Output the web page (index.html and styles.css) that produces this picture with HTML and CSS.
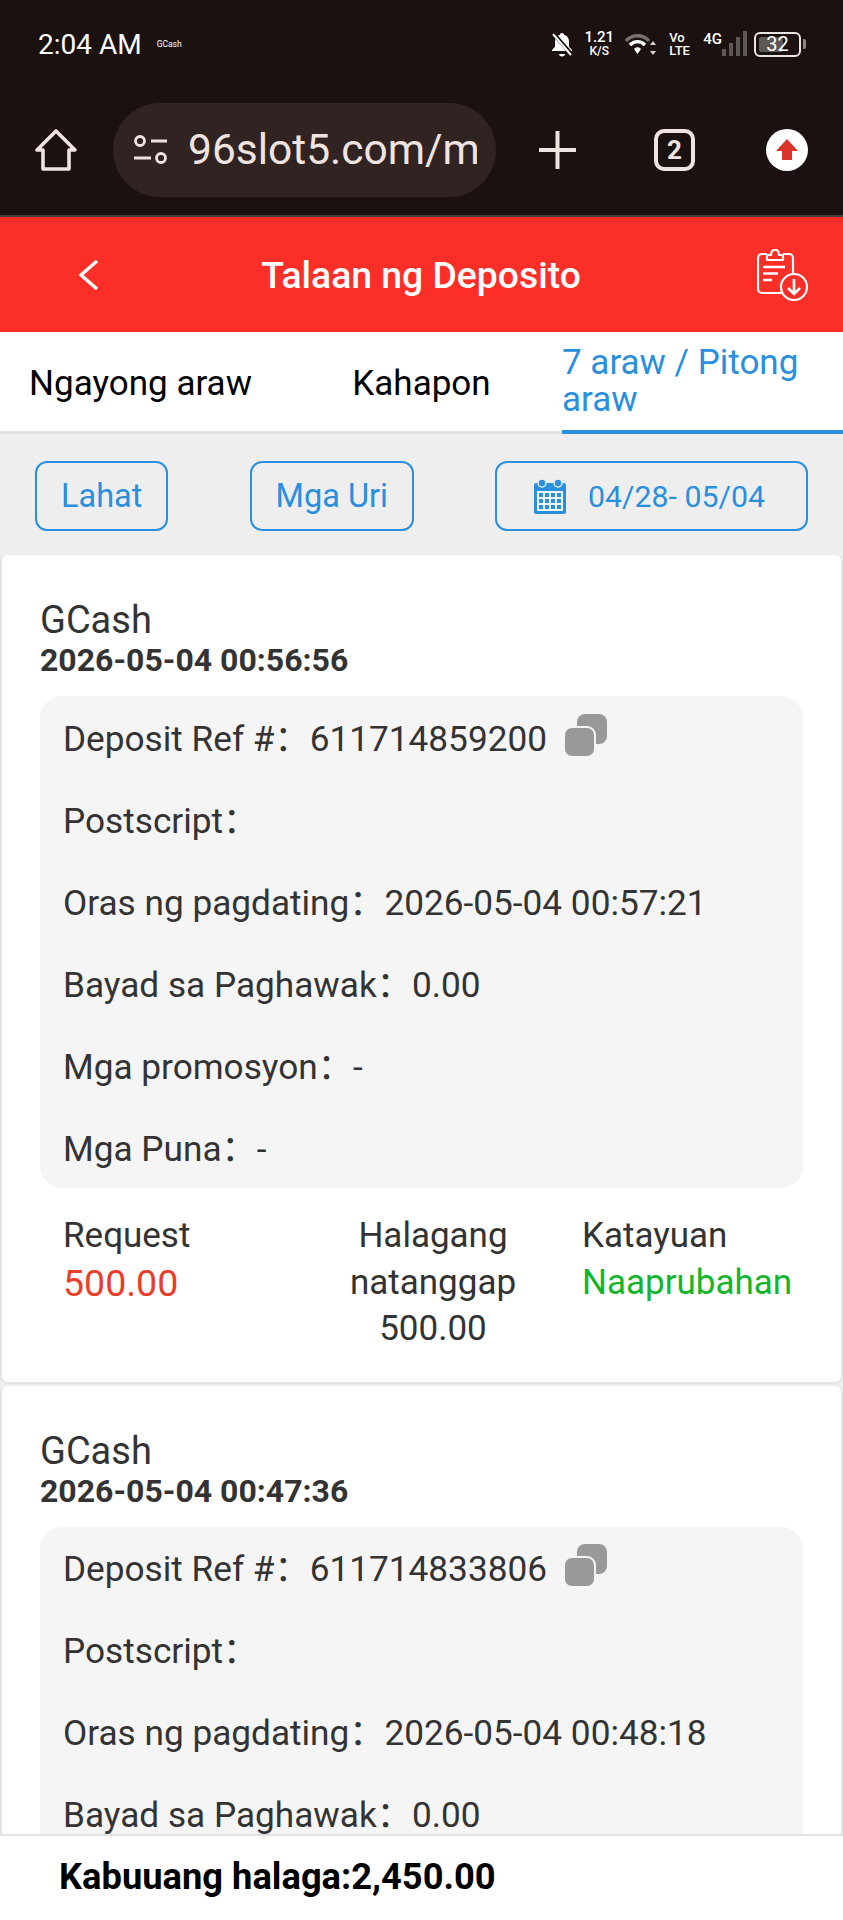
FILE: index.html
```html
<!DOCTYPE html>
<html lang="tl">
<head>
<meta charset="utf-8">
<title>Talaan ng Deposito</title>
<link rel="stylesheet" href="styles.css">
</head>
<body>
<div class="phone">
	<div class="status">
		<span class="time">2:04 AM</span>
		<span class="notice">GCash</span>
		<div class="status-right">
			<svg class="i-bell" viewBox="0 0 22 25"><path d="M11 1c1.200 0 2 .8 2 1.800 3.400.8 5 3.400 5 7v5l3 3.200v1H1v-1l3-3.200v-5c0-3.600 1.600-6.200 5-7C9 1.800 9.800 1 11 1zM8 22h6c0 1.300-1.300 2.500-3 2.500S8 23.300 8 22z" fill="#fff"/><path d="M2 1l19 22" stroke="#1a1110" stroke-width="4"/><path d="M2 2l18 21" stroke="#fff" stroke-width="2"/></svg>
			<div class="speed"><b>1.21</b><b>K/S</b></div>
			<svg class="i-wifi" viewBox="0 0 31 24"><path d="M1 9c6-7 17-7 23 0" fill="none" stroke="#77716f" stroke-width="3.400"/><path d="M5 13c4-4.500 11-4.500 15 0" fill="none" stroke="#fff" stroke-width="3.400"/><path d="M9 17c2-2.200 5-2.200 7 0l-3.500 5z" fill="#fff"/><path d="M28 9l3 4h-6zM28 23l3-4h-6z" fill="#d8d4d2"/></svg>
			<div class="volte"><b>Vo</b><b>LTE</b></div>
			<b class="net">4G</b>
			<svg class="i-signal" viewBox="0 0 26 26"><rect x="1" y="18" width="4" height="7" fill="#5d5755"/><rect x="8" y="12" width="4" height="13" fill="#5d5755"/><rect x="15" y="6" width="4" height="19" fill="#5d5755"/><rect x="22" y="0" width="4" height="25" fill="#5d5755"/></svg>
			<div class="battery"><span class="battery-fill"></span><span class="battery-num">32</span></div>
			<span class="battery-nub"></span>
		</div>
	</div>

	<div class="toolbar">
		<svg class="i-home" viewBox="0 0 42 42"><path d="M21 2L2 21h6v19h26V21h6z" fill="none" stroke="#f0e4e0" stroke-width="3.600" stroke-linejoin="round"/></svg>
		<div class="url">
			<svg class="i-tune" viewBox="0 0 35 29"><circle cx="7" cy="6" r="4.500" fill="none" stroke="#f0e4e0" stroke-width="2.800"/><path d="M18 6h16M1 23h17" stroke="#f0e4e0" stroke-width="3"/><circle cx="28" cy="23" r="4.500" fill="none" stroke="#f0e4e0" stroke-width="2.800"/></svg>
			<span class="url-text">96slot5.com/ma</span>
		</div>
		<svg class="i-plus" viewBox="0 0 37 38"><path d="M18.500 1v36M1 19h35" stroke="#f0e4e0" stroke-width="4" stroke-linecap="round"/></svg>
		<div class="tabcount">2</div>
		<svg class="i-update" viewBox="0 0 42 42"><circle cx="21" cy="21" r="21" fill="#fff"/><path d="M21 10l11 12h-6v9H16v-9h-6z" fill="#d9352b"/></svg>
	</div>

	<div class="head">
		<svg class="i-back" viewBox="0 0 20 30"><path d="M18 1L2 15l16 14" fill="none" stroke="#fff" stroke-width="3.400"/></svg>
		<h1 class="title">Talaan ng Deposito</h1>
		<svg class="i-record" viewBox="0 0 51 52"><path d="M10 5H5a4 4 0 0 0-4 4v31a4 4 0 0 0 4 4h20M26 5h6a4 4 0 0 1 4 4v15" fill="none" stroke="#fff" stroke-width="2.200"/><path d="M10 11V6h4c0-7 8-7 8 0h4v5z" fill="none" stroke="#fff" stroke-width="2.200" stroke-linejoin="round"/><path d="M6 18h22M6 24.500h15M6 31h9" stroke="#fff" stroke-width="2.600"/><circle cx="37" cy="38" r="13" fill="none" stroke="#fff" stroke-width="2.200"/><path d="M37 30v15M31 39l6 6 6-6" fill="none" stroke="#fff" stroke-width="2.600"/></svg>
	</div>

	<div class="tabs">
		<div class="tab">Ngayong araw</div>
		<div class="tab">Kahapon</div>
		<div class="tab active">7 araw / Pitong araw</div>
	</div>

	<div class="filter">
		<div class="btn">Lahat</div>
		<div class="btn">Mga Uri</div>
		<div class="btn date">
			<svg class="i-cal" viewBox="0 0 32 36"><path d="M2 5h28a2 2 0 0 1 2 2v27a2 2 0 0 1-2 2H2a2 2 0 0 1-2-2V7a2 2 0 0 1 2-2z" fill="#2a8fdc"/><rect x="3" y="13" width="26" height="20" fill="#eef5fb"/><circle cx="8" cy="5" r="4" fill="#2a8fdc" stroke="#eeeeef" stroke-width="1.500"/><circle cx="24" cy="5" r="4" fill="#2a8fdc" stroke="#eeeeef" stroke-width="1.500"/><path d="M5 15h4v4H5zM11 15h4v4h-4zM17 15h4v4h-4zM23 15h4v4h-4zM5 21h4v4H5zM11 21h4v4h-4zM17 21h4v4h-4zM23 21h4v4h-4zM5 27h4v4H5zM11 27h4v4h-4zM17 27h4v4h-4zM23 27h4v4h-4z" fill="#2a8fdc"/></svg>
			<span>04/28- 05/04</span>
		</div>
	</div>

	<div class="card">
		<div class="name">GCash</div>
		<div class="when">2026-05-04 00:56:56</div>
		<div class="panel">
			<div class="row"><span>Deposit Ref #：611714859200</span>
				<svg class="i-copy" viewBox="0 0 43 43"><rect x="13" y="0" width="30" height="30" rx="8" fill="#999"/><rect x="0" y="13" width="31" height="30" rx="8" fill="#999" stroke="#f5f5f5" stroke-width="2"/></svg>
			</div>
			<div class="row">Postscript：</div>
			<div class="row">Oras ng pagdating：2026-05-04 00:57:21</div>
			<div class="row">Bayad sa Paghawak：0.00</div>
			<div class="row">Mga promosyon：-</div>
			<div class="row">Mga Puna：-</div>
		</div>
		<div class="sums">
			<div class="sum">Request<div class="red">500.00</div></div>
			<div class="sum mid">Halagang natanggap<div>500.00</div></div>
			<div class="sum last">Katayuan<div class="green">Naaprubahan</div></div>
		</div>
	</div>

	<div class="card">
		<div class="name">GCash</div>
		<div class="when">2026-05-04 00:47:36</div>
		<div class="panel">
			<div class="row"><span>Deposit Ref #：611714833806</span>
				<svg class="i-copy" viewBox="0 0 43 43"><rect x="13" y="0" width="30" height="30" rx="8" fill="#999"/><rect x="0" y="13" width="31" height="30" rx="8" fill="#999" stroke="#f5f5f5" stroke-width="2"/></svg>
			</div>
			<div class="row">Postscript：</div>
			<div class="row">Oras ng pagdating：2026-05-04 00:48:18</div>
			<div class="row">Bayad sa Paghawak：0.00</div>
		</div>
	</div>

	<div class="total">Kabuuang halaga:2,450.00</div>
</div>
</body>
</html>
```

FILE: styles.css
```css
* { margin: 0; padding: 0; box-sizing: border-box; }
body { background: #fff; font-family: Roboto, "Noto Sans CJK SC", sans-serif; color: #333; }
svg { display: block; flex: none; }

.phone { width: 843px; height: 1920px; overflow: hidden; position: relative; background: #eeeeef; }

/* status bar */
.status { height: 84px; padding: 4px 37px 0 38px; background: #1a1110; color: #fff; display: flex; align-items: center; }
.time { font-size: 28px; }
.notice { font-size: 8.500px; margin-left: 15px; }
.status-right { margin-left: auto; display: flex; align-items: center; }
.status-right b { display: block; font-weight: 500; }
.i-bell { width: 22px; height: 25px; }
.speed { margin-left: 11px; width: 30px; text-align: center; font-size: 13px; line-height: 14px; }
.speed b:first-child { font-size: 15px; }
.speed b:last-child { font-size: 12px; }
.i-wifi { width: 31px; height: 24px; margin-left: 11px; }
.volte { margin-left: 13px; font-size: 13px; line-height: 13px; width: 24px; }
.net { font-size: 15px; margin: -10px 0 0 10px; }
.i-signal { width: 26px; height: 26px; margin-left: -1px; }
.battery { width: 47px; height: 25px; margin-left: 7px; border: 2px solid #e8e4e2; border-radius: 6px; position: relative; text-align: center; font-size: 20px; line-height: 21px; }
.battery-fill { position: absolute; left: 3px; top: 3px; bottom: 3px; width: 24px; background: #5d5755; border-radius: 2px; }
.battery-num { position: relative; }
.battery-nub { width: 3px; height: 10px; margin-left: 2px; background: #8c8684; border-radius: 0 2px 2px 0; }

/* browser bar */
.toolbar { height: 133px; background: #1a1110; border-bottom: 2px solid #4a3a38; display: flex; align-items: center; padding-left: 35px; }
.i-home { width: 42px; height: 42px; }
.url { width: 383px; height: 94px; margin-left: 36px; padding: 0 19px 0 20px; border-radius: 47px; background: #322323; display: flex; align-items: center; }
.i-tune { width: 35px; height: 29px; }
.url-text { margin-left: 20px; flex: 1; overflow: hidden; white-space: nowrap; font-size: 42.500px; color: #f0e4e0; }
.i-plus { width: 37px; height: 38px; margin-left: 43px; }
.tabcount { width: 41px; height: 42px; margin-left: 78px; border: 4px solid #f0e4e0; border-radius: 10px; text-align: center; color: #f0e4e0; font-size: 26px; font-weight: 700; line-height: 34px; }
.i-update { width: 42px; height: 42px; margin-left: 71px; }

/* page head */
.head { height: 115px; background: #fb2e28; display: flex; align-items: center; padding: 0 35px 0 79px; }
.i-back { width: 20px; height: 30px; }
.title { flex: 1; margin-right: 14px; text-align: center; font-size: 37.300px; font-weight: 500; color: #fff; }
.i-record { width: 51px; height: 52px; }

.tabs { height: 102px; background: #fff; border-bottom: 3px solid #e2e2e2; display: flex; }
.tab { width: 281px; height: 102px; display: flex; align-items: center; justify-content: center; font-size: 35px; line-height: 37px; color: #000; padding-top: 1px; }
.tab.active { color: #2a8fdc; justify-content: flex-start; padding-top: 0; border-bottom: 4px solid #2a8fdc; }

.filter { height: 121px; padding: 27px 35px 0; display: flex; justify-content: space-between; align-items: flex-start; }
.btn { height: 70px; padding: 0 24px; border: 2px solid #2a8fdc; border-radius: 12px; display: flex; align-items: center; color: #2a8fdc; font-size: 32.500px; }
.date { width: 313px; padding: 0 0 0 37px; font-size: 30.300px; }
.i-cal { width: 32px; height: 36px; margin-right: 22px; }

.card { margin-bottom: 2px; padding: 41px 38px 29px; background: #fff; border: 2px solid #e4e4e4; border-top: 0; border-radius: 6px 6px 8px 8px; }
.name { font-size: 38px; line-height: 48px; }
.when { font-size: 32px; font-weight: 700; line-height: 36px; margin-top: -2px; }
.panel { margin-top: 18px; background: #f5f5f5; border-radius: 22px; padding-left: 23px; }
.row { height: 82px; padding-bottom: 4px; display: flex; align-items: center; font-size: 35.200px; }
.i-copy { width: 43px; height: 43px; margin-left: 17px; }

.sums { display: flex; margin-top: 25px; padding-left: 23px; font-size: 35px; line-height: 46.500px; }
.sum { width: 279px; }
.sum.mid { width: 182px; text-align: center; }
.sum.last { width: auto; margin-left: 58px; white-space: nowrap; }
.red { color: #e93c2a; font-size: 37.500px; }
.green { color: #13b52c; }

.total { position: absolute; left: 0; right: 0; bottom: 0; height: 86px; padding-left: 59px; background: #fff; border-top: 2px solid #e2e2e2; font-size: 36.300px; font-weight: 700; color: #000; line-height: 82px; }
```
